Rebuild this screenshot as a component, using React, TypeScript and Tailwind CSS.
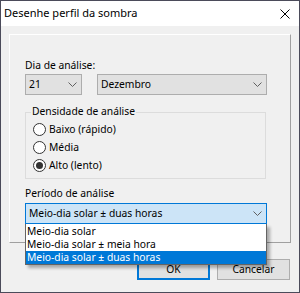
import React from 'react';

const Chevron = () => (
  <svg width="9" height="5" viewBox="0 0 9 5" className="shrink-0">
    <path d="M0.5 0.5 L4.5 4.5 L8.5 0.5" fill="none" stroke="#606060" strokeWidth="1" />
  </svg>
);

const Radio = ({ label, checked = false }: { label: string; checked?: boolean }) => (
  <div className="flex items-center h-[18px] gap-[3px]">
    <div className="w-[13px] h-[13px] rounded-full border border-[#333333] bg-white flex items-center justify-center shrink-0">
      {checked && <div className="w-[7px] h-[7px] rounded-full bg-[#333333]"></div>}
    </div>
    <span>{label}</span>
  </div>
);

export default function App() {
  return (
    <div
      className="w-[300px] h-[293px] border border-[#4b4b5a] bg-[#f0f0f0] flex flex-col text-[10.3px] text-black leading-[13px]"
      style={{ fontFamily: '"Noto Sans", sans-serif' }}
    >
      {/* title bar */}
      <div className="h-[25px] bg-white flex items-start justify-between pl-[3px] pr-[9px] pt-[5px] shrink-0">
        <span className="text-[11px] leading-[13px]">Desenhe perfil da sombra</span>
        <svg width="10" height="10" viewBox="0 0 10 10" className="mt-[3px]">
          <path d="M0.5 0.5 L9.5 9.5 M9.5 0.5 L0.5 9.5" stroke="#000" strokeWidth="1" />
        </svg>
      </div>

      <div className="flex-1 flex flex-col px-[8px] pt-[8px]">
        <div className="h-[209px] border border-t-white border-l-white border-r-[#a0a0a0] border-b-[#a0a0a0] pl-[15px] pt-[24px] flex flex-col">
          <div className="h-[13px]">Dia de análise:</div>
          <div className="flex gap-[15px] mt-[2px]">
            <div className="w-[57px] h-[21px] bg-[#e1e1e1] border border-[#adadad] flex items-center justify-between pl-[3px] pr-[4px]">
              <span>21</span>
              <Chevron />
            </div>
            <div className="w-[170px] h-[21px] bg-[#e1e1e1] border border-[#adadad] flex items-center justify-between pl-[3px] pr-[4px]">
              <span>Dezembro</span>
              <Chevron />
            </div>
          </div>

          <div className="relative mt-[17px] w-[241px] h-[67px] border border-[#dcdcdc] pl-[7px] pt-[7px]">
            <span className="absolute left-[5px] top-[-8px] bg-[#f0f0f0] px-[1px]">Densidade de análise</span>
            <Radio label="Baixo (rápido)" />
            <Radio label="Média" />
            <Radio label="Alto (lento)" checked />
          </div>

          <div className="h-[13px] mt-[8px]">Período de análise</div>
          <div className="relative mt-[3px] w-[242px]">
            <div className="h-[21px] bg-[#cce4f7] border border-[#0078d7] flex items-center justify-between pl-[3px] pr-[4px]">
              <span>Meio-dia solar ± duas horas</span>
              <Chevron />
            </div>
            <div className="absolute left-0 top-[21px] w-[242px] z-10 bg-white border-x border-b border-[#646464] pt-[1px] shadow-[3px_3px_3px_rgba(0,0,0,0.3)] leading-[11px]">
              <div className="h-[13px] pl-[1px] flex items-center">Meio-dia solar</div>
              <div className="h-[13px] pl-[1px] flex items-center">Meio-dia solar ± meia hora</div>
              <div className="h-[13px] pl-[1px] flex items-center bg-[#0078d7] text-white">Meio-dia solar ± duas horas</div>
            </div>
          </div>
        </div>

        <div className="flex justify-end gap-[7px] mt-[16px] pr-[1px]">
          <div className="w-[73px] h-[21px] bg-[#e1e1e1] border-2 border-[#0078d7] flex items-center justify-center">OK</div>
          <div className="w-[73px] h-[21px] bg-[#e1e1e1] border border-[#adadad] flex items-center justify-center">Cancelar</div>
        </div>
      </div>
    </div>
  );
}
